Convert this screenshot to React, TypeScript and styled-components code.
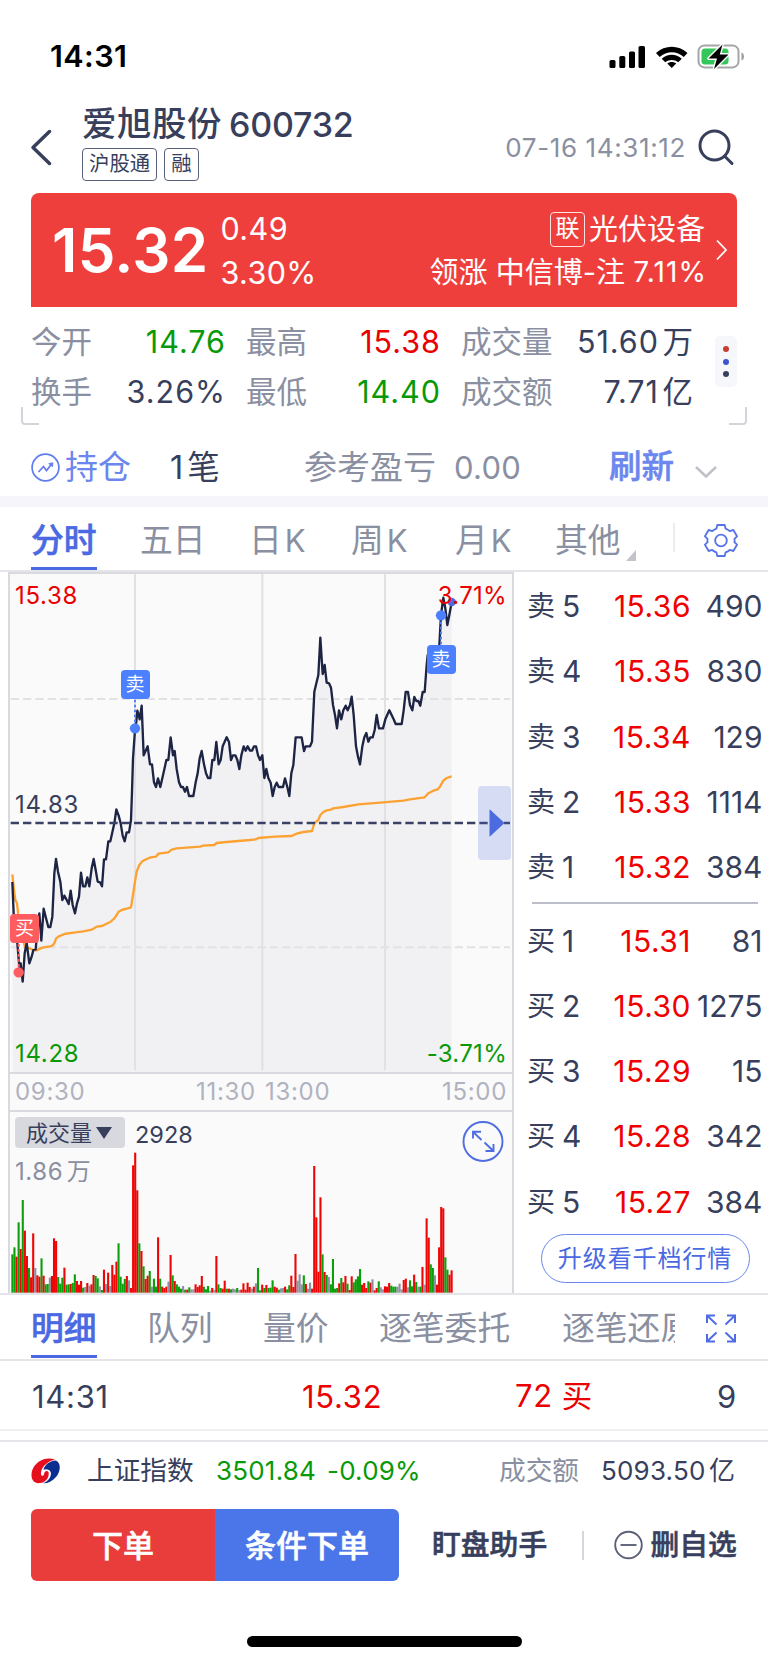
import React from 'react';
import styled, { createGlobalStyle, css } from 'styled-components';

const INK = '#383f5c';
const MUTED = '#8a8fa1';
const RED = '#ea0000';
const GREEN = '#089908';
const BLUE = '#4a69e2';
const LINE = '#e5e5e9';
const FRAME = '#d9dae0';

const Global = createGlobalStyle`
  html, body { margin: 0; padding: 0; background: #fff; }
  * { box-sizing: border-box; }
  body {
    font-family: Inter, "Noto Sans CJK SC", sans-serif;
    color: ${INK};
    line-height: 1;
    -webkit-font-smoothing: antialiased;
  }
  svg { display: block; flex: none; }
`;

/* a weight between medium and bold */
const semibold = css`
  font-weight: 500;
  -webkit-text-stroke: 0.55px currentColor;
`;

const Screen = styled.main`
  width: 768px;
  height: 1663px;
  display: flex;
  flex-direction: column;
  overflow: hidden;
  background: #fff;
  white-space: nowrap;
`;

/* ---------- status bar ---------- */
const StatusBar = styled.div`
  height: 100px;
  padding: 12px 22px 0 50px;
  display: flex;
  justify-content: space-between;
  align-items: center;
`;
const Clock = styled.span`
  font-size: 30.5px;
  font-weight: 600;
  color: #000;
  letter-spacing: 0.4px;
`;

/* ---------- header ---------- */
const Header = styled.header`
  height: 93px;
  padding-left: 29px;
  display: flex;
`;
const BackWrap = styled.div`
  width: 53px;
  padding-top: 28px;
`;
const TitleBlock = styled.div`
  flex: 1;
  padding-top: 6.5px;
`;
const Title = styled.h1`
  margin: 0;
  height: 36px;
  display: flex;
  align-items: center;
  gap: 7px;
  font-size: 34.5px;
  font-weight: 500;
`;
const Code = styled.span`
  font-size: 34px;
  font-weight: 500;
  letter-spacing: -0.2px;
`;
const Name = styled.span`
  letter-spacing: 0.5px;
`;
const Tags = styled.div`
  display: flex;
  gap: 7px;
  margin-top: 5.5px;
`;
const Tag = styled.span`
  height: 33px;
  padding: 0 6px;
  display: flex;
  align-items: center;
  border: 1.5px solid #5b617b;
  border-radius: 4px;
  font-size: 20.4px;
`;
const Stamp = styled.div`
  padding: 35px 12px 0 0;
  height: 60px;
  font-size: 26px;
  letter-spacing: 0.62px;
  color: ${MUTED};
`;
const SearchWrap = styled.div`
  width: 70px;
  padding-top: 29px;
`;

/* ---------- quote card ---------- */
const QuoteCard = styled.section`
  height: 114px;
  margin: 0 31px;
  padding-left: 21px;
  border-radius: 8px 8px 0 0;
  background: #ef3f3d;
  color: #fff;
  display: flex;
`;
const Price = styled.div`
  width: 168.5px;
  padding-top: 27px;
  font-size: 60px;
  font-weight: 600;
  letter-spacing: 0.3px;
`;
const Change = styled.div`
  display: flex;
  flex-direction: column;
  padding-top: 21px;
  gap: 13px;
  font-size: 30.5px;
  letter-spacing: 0.4px;
`;
const Sector = styled.div`
  flex: 1;
  padding-top: 18px;
  display: flex;
  flex-direction: column;
  align-items: flex-end;
`;
const SectorRow = styled.div`
  height: 36px;
  display: flex;
  align-items: center;
  font-size: 29px;
`;
const LeadRow = styled.div`
  height: 44px;
  margin-top: 3px;
  display: flex;
  align-items: center;
  font-size: 29px;
  white-space: pre;
`;
const LeadNumber = styled.span`
  font-size: 28px;
  letter-spacing: 1.1px;
  margin-right: -2px;
`;
const SectorTag = styled.span`
  width: 35px;
  height: 35px;
  margin-right: 4px;
  border: 1.5px solid rgba(255, 255, 255, 0.85);
  border-radius: 4px;
  display: flex;
  align-items: center;
  justify-content: center;
  font-size: 24px;
`;
const CardArrow = styled.div`
  width: 32px;
  padding: 46px 0 0 10px;
`;

/* ---------- stats ---------- */
const Stats = styled.section`
  position: relative;
  height: 118px;
  padding: 10.5px 31px 0 31px;
  display: flex;
`;
const StatGrid = styled.div`
  width: 662px;
  display: grid;
  grid-template-columns: 62px 132px 83px 132px 113px 139px;
  grid-auto-rows: 49.5px;
  align-items: center;
  font-size: 30px;
`;
const StatLabel = styled.span<{ $inset?: boolean }>`
  color: ${MUTED};
  padding-left: ${p => (p.$inset ? 21 : 0)}px;
  font-size: 30.5px;
`;
const StatValue = styled.span<{ $c?: string }>`
  text-align: right;
  color: ${p => p.$c || INK};
  font-size: 30.5px;
  letter-spacing: 1px;
  margin-right: -1px;
`;
const Unit = styled.span`
  margin-left: 3.5px;
  letter-spacing: 0;
`;
const MoreDots = styled.div`
  width: 22px;
  height: 51px;
  margin: 18.5px 0 0 22px;
  padding: 10px 0;
  border-radius: 5px;
  background: #f6f7fa;
  display: flex;
  flex-direction: column;
  align-items: center;
  justify-content: space-between;
`;
const Dot = styled.i<{ $c: string }>`
  width: 6px;
  height: 6px;
  border-radius: 3px;
  background: ${p => p.$c};
`;
const Corner = styled.i<{ $side: 'left' | 'right' }>`
  position: absolute;
  bottom: 0;
  ${p => p.$side}: 21px;
  width: 18px;
  height: 18px;
  border-bottom: 2px solid #d3d5dc;
  border-${p => p.$side}: 2px solid #d3d5dc;
  border-bottom-${p => p.$side}-radius: 4px;
`;

/* ---------- holdings ---------- */
const Holdings = styled.section`
  height: 71px;
  padding: 14px 50px 0 31px;
  display: flex;
  align-items: center;
  font-size: 33px;
`;
const HoldLabel = styled.span`
  width: 103px;
  padding-left: 5px;
  color: #6b86ee;
`;
const HoldCount = styled.span`
  width: 141px;
  padding-left: 7px;
  padding-top: 1px;
  font-size: 32.5px;
`;
const CountUnit = styled.span`
  margin-left: 4px;
`;
const HoldHint = styled.span`
  width: 150px;
  color: ${MUTED};
`;
const HoldValue = styled.span`
  width: 155px;
  color: ${MUTED};
  font-size: 31px;
  letter-spacing: 0.3px;
`;
const Refresh = styled.button`
  border: 0;
  padding: 0;
  background: none;
  font: inherit;
  ${semibold}
  font-size: 32.5px;
  color: #6b86ee;
  width: 86px;
  text-align: left;
`;
const Band = styled.div`
  height: 11px;
  background: #f5f5fb;
`;

/* ---------- tabs ---------- */
const Tabs = styled.nav<{ $h: number }>`
  height: ${p => p.$h}px;
  padding-left: 31px;
  border-bottom: 2px solid ${LINE};
  display: flex;
`;
const Tab = styled.span<{ $w: number; $active?: boolean }>`
  width: ${p => p.$w}px;
  flex: none;
  overflow: hidden;
  font-size: 32.8px;
  line-height: 66px;
  color: ${p => (p.$active ? BLUE : MUTED)};
  ${p => p.$active && semibold}
`;
const ActiveMark = styled.span`
  display: block;
  width: 66px;
  height: 63px;
  border-bottom: 3px solid ${BLUE};
`;
const Kline = styled.span`
  display: inline-block;
  margin-left: 3px;
  font-size: 31px;
`;
const TabTools = styled.div<{ $top: number }>`
  padding-top: ${p => p.$top}px;
  display: flex;
`;
const TabCorner = styled.i`
  width: 47px;
  padding-top: 27px;
`;
const TabRule = styled.i`
  width: 1.5px;
  height: 29px;
  margin-right: 29.5px;
  background: #ececf0;
`;

/* ---------- chart and order book ---------- */
const Market = styled.section`
  height: 723px;
  padding-left: 8px;
  border-bottom: 2px solid ${LINE};
  display: flex;
`;
const ChartColumn = styled.div`
  width: 506px;
  border: 2px solid ${FRAME};
  border-bottom: 0;
  background: #fafafa;
  display: flex;
  flex-direction: column;
`;
const PricePane = styled.div`
  position: relative;
  height: 500px;
  border-bottom: 2px solid ${FRAME};
`;
const AxisLabel = styled.span<{ $x: 'left' | 'right'; $top: number; $c: string }>`
  position: absolute;
  ${p => p.$x}: 5px;
  top: ${p => p.$top}px;
  font-size: 24px;
  letter-spacing: ${p => (p.$x === 'left' ? 0.7 : 0.3)}px;
  color: ${p => p.$c};
`;
const TradePin = styled.span<{ $x: number; $y: number; $c: string }>`
  position: absolute;
  left: ${p => p.$x}px;
  top: ${p => p.$y}px;
  width: 29px;
  height: 29px;
  border-radius: 4px;
  background: ${p => p.$c};
  color: #fff;
  font-size: 19px;
  line-height: 29px;
  text-align: center;
`;
const Handle = styled.div`
  position: absolute;
  right: 1px;
  top: 212px;
  width: 33px;
  height: 74px;
  padding: 23px 0 0 11px;
  border-radius: 4px;
  background: rgba(77, 107, 224, 0.21);
`;
const TimeAxis = styled.div`
  height: 38px;
  padding: 5px 5px 0;
  border-bottom: 2px solid ${FRAME};
  display: grid;
  grid-template-columns: 181px 69px 1fr auto;
  font-size: 24px;
  line-height: 26px;
  letter-spacing: 0.7px;
  color: #b0b3bf;
`;
const VolumePane = styled.div`
  position: relative;
  flex: 1;
  padding: 5px 8px 0 5px;
`;
const VolumeHead = styled.div`
  position: relative;
  display: flex;
  height: 31px;
`;
const Indicator = styled.span`
  width: 110px;
  padding-left: 11px;
  border-radius: 4px;
  background: #d8d9de;
  display: flex;
  align-items: center;
  gap: 4px;
  font-size: 22px;
`;
const VolumeNow = styled.span`
  flex: 1;
  padding: 6px 0 0 10px;
  font-size: 23.5px;
`;
const ExpandWrap = styled.div`
  padding-top: 3.5px;
`;
const VolumeMax = styled.div`
  position: relative;
  margin: 12px 0 0 0;
  font-size: 24px;
  letter-spacing: 0.6px;
  color: ${MUTED};
`;
const VolumePlot = styled.svg`
  position: absolute;
  left: 0;
  bottom: 0;
`;
const Book = styled.div`
  flex: 1;
  padding: 1.5px 5px 0 13px;
`;
const BookRow = styled.div`
  height: 65.25px;
  display: grid;
  grid-template-columns: 35px 48px 81px 71.5px;
  align-items: center;
  font-size: 30px;
`;
const Side = styled.span`
  font-size: 28px;
`;
const BookPrice = styled.span`
  color: #f00000;
  text-align: right;
  letter-spacing: 0.5px;
`;
const BookQty = styled.span`
  text-align: right;
  justify-self: end;
`;
const BookRule = styled.div`
  height: 2px;
  margin: 2.7px 5px 3.5px;
  background: #bcbec9;
`;
const Upgrade = styled.button`
  display: block;
  width: 209px;
  height: 49px;
  margin: 0 0 0 13.5px;
  padding: 0;
  border: 1.5px solid #6b87ee;
  border-radius: 25px;
  background: #fff;
  color: ${BLUE};
  font: inherit;
  font-size: 24px;
  letter-spacing: 0.9px;
`;

/* ---------- tick list ---------- */
const Tick = styled.div`
  height: 70px;
  padding: 2px 31px 0 32px;
  border-bottom: 2px solid #f0f0f2;
  display: grid;
  grid-template-columns: 270px 213px 1fr auto;
  align-items: center;
  font-size: 31px;
  letter-spacing: 0.7px;
`;
const Up = styled.span`
  color: ${RED};
`;
const TickSide = styled.span`
  margin-left: 9px;
  font-size: 30.5px;
`;

/* ---------- footer ---------- */
const IndexBar = styled.section`
  height: 61px;
  margin-top: 9px;
  padding: 0 31px 2px;
  border-top: 2px solid ${LINE};
  display: flex;
  align-items: center;
  font-size: 26px;
`;
const IndexName = styled.span`
  width: 129px;
  margin-left: 27px;
  font-size: 26.7px;
`;
const IndexValue = styled.span<{ $w: number }>`
  width: ${p => p.$w}px;
  color: ${GREEN};
  letter-spacing: 0.2px;
`;
const IndexLabel = styled.span`
  width: 102px;
  color: ${MUTED};
  font-size: 26.7px;
`;
const IndexTurnover = styled.span`
  letter-spacing: 0.2px;
`;
const Actions = styled.section`
  height: 72px;
  margin-top: 8px;
  padding-left: 31px;
  display: flex;
  align-items: center;
`;
const OrderButton = styled.button<{ $c: string; $r: string }>`
  width: 184px;
  height: 72px;
  border: 0;
  padding: 0;
  border-radius: ${p => p.$r};
  background: ${p => p.$c};
  color: #fff;
  font: inherit;
  font-size: 31px;
  ${semibold}
`;
const Assistant = styled.span`
  width: 150px;
  margin-left: 33px;
  font-size: 28.8px;
  ${semibold}
`;
const ActionRule = styled.i`
  width: 1.5px;
  height: 29px;
  margin-right: 30px;
  background: #d5d7de;
`;
const Remove = styled.span`
  margin-left: 8px;
  font-size: 28.8px;
  ${semibold}
`;
const HomeBar = styled.div`
  width: 275px;
  height: 11px;
  margin: 55px 0 0 247px;
  border-radius: 6px;
  background: #000;
`;

/* ---------- data ---------- */
const asks = [['5', '15.36', '490'], ['4', '15.35', '830'], ['3', '15.34', '129'], ['2', '15.33', '1114'], ['1', '15.32', '384']];
const bids = [['1', '15.31', '81'], ['2', '15.30', '1275'], ['3', '15.29', '15'], ['4', '15.28', '342'], ['5', '15.27', '384']];

const priceLine = `37,951 41,1045 46,1080 52,1135 58,1205 62,1195 68,1250 74,1165 80,1133 88,1195 95,1175 100,1155 107,1153
112,1095 118,1045 124,1127 131,1031 137,1055 145,1086 151,1086 157,1055 163,925 168,882 174,920 181,950 187,1005 193,992
199,1003 206,1017 212,977 218,1020 225,1045 231,1015 237,995 243,923 249,964 256,964 262,937 268,964 275,910 281,882
287,915 293,950 300,952 306,964 312,883 318,883 325,829 331,829 343,775 349,733 356,752 362,775 368,812 374,829 380,802
387,802 393,765 396,680 399,580 405,495 409,470 412,437 416,450 419,463 425,422 431,571 443,544 450,598 456,598 462,652
468,666 474,640 481,666 493,613 499,585 505,585 512,517 519,571 524,558 530,612 537,652 543,666 549,666 555,680 561,666
567,693 580,693 587,652 593,625 599,580 605,558 612,598 618,625 624,639 631,639 637,585 643,585 649,531 656,598 662,585
668,544 680,517 687,531 693,585 699,571 706,571 712,585 718,612 724,571 731,544 737,557 743,544 750,557 756,557 762,544
768,544 774,571 780,585 787,571 793,639 799,612 805,639 812,653 818,693 824,666 830,653 836,666 849,666 855,640 862,666
868,693 874,625 880,600 887,517 905,517 912,558 917,544 930,544 936,530 943,380 949,355 955,330 961,218 968,327 974,300
980,353 987,355 993,368 999,420 1005,450 1011,490 1017,436 1024,463 1030,436 1037,422 1043,436 1050,420 1055,395
1061,450 1068,544 1074,575 1080,598 1087,544 1093,517 1099,504 1105,530 1111,517 1118,517 1124,495 1130,450 1137,490
1149,490 1156,463 1168,436 1181,463 1187,477 1205,477 1211,436 1217,381 1224,381 1230,420 1237,436 1243,396 1249,408
1255,408 1261,422 1268,381 1274,381 1280,300 1283,270 1295,262 1318,240 1323,150 1330,98 1336,130 1342,180 1348,150 1355,112`;

const averageLine = `37,928 42,975 46,1005 51,1015 55,1050 65,1115 75,1145 90,1151 100,1155 110,1156 120,1151 131,1147 150,1144
157,1142 163,1135 168,1121 175,1115 193,1107 220,1103 250,1099 275,1094 290,1085 306,1083 318,1077 331,1071 343,1060
350,1050 356,1040 365,1035 380,1031 393,1027 399,990 405,950 410,920 418,900 427,889 440,882 452,877 468,875 475,866
505,862 515,854 530,850 600,845 610,842 643,840 650,834 680,831 750,825 767,823 775,819 825,815 875,813 890,806 910,801
936,798 943,775 955,765 961,750 970,741 980,736 992,734 1000,730 1030,726 1075,718 1150,712 1210,707 1230,703 1274,697
1285,685 1300,677 1313,673 1320,665 1330,647 1340,639 1355,634`;

const volumes = `G115 G136 R108 G211 R131 G278 R186 R110 G74 R46 R178 N74 R52 R48 G103 R51 G25 G26 N45 R50 R163 R155 G47 G27
G45 R75 G24 G25 R26 G29 G55 R35 R24 R35 G15 N17 R29 N21 R25 R53 G50 G43 N19 G8 R69 N26 R60 N20 R83 R54 R93 G148 G48 G27
G41 R50 N37 R14 R382 R420 R307 G148 R125 G79 R41 R51 G65 N18 G42 G18 R166 G42 R18 R14 R18 N33 R113 G52 R35 G25 G18 G12
N20 G9 R9 G16 N10 N10 R25 R17 R22 R50 G18 G10 G20 N6 R14 N8 R110 G25 G14 R12 R36 G12 R12 G10 N12 N10 G14 N8 R9 R28 R9
R30 R17 N12 R18 N28 G74 G7 R24 G14 R23 G14 G15 G37 R18 R15 G9 N13 N14 R18 G10 G22 R51 R17 R116 N36 N55 N25 G52 R26 N12
N30 R12 R380 R226 R63 R286 G115 R62 G53 N47 G25 G101 G12 G14 R28 G44 R31 R50 G27 R8 R49 G31 G40 G49 G71 R24 R29 R14 G34
R30 N40 R7 R14 G34 N16 N10 R19 R18 R29 G21 G18 G18 N18 N27 N10 R38 R42 N16 G37 G19 R54 G32 N18 G18 R77 N24 R223 R165 G85
G74 N52 R24 R136 R257 R253 G106 G69 R54 R67`.split(/\s+/);
const volumeColors: Record<string, string> = { R: '#ee0505', G: '#0c9f0c', N: '#8e91a0' };

/* ---------- pieces ---------- */
const StatusIcons = () => (
  <svg width="138" height="26" viewBox="0 0 138 26">
    <rect x="1.500" y="17" width="6" height="8" rx="1.6" />
    <rect x="11.300" y="13" width="6" height="12" rx="1.6" />
    <rect x="21" y="8.500" width="6" height="16.500" rx="1.6" />
    <rect x="30.500" y="3" width="6.500" height="22" rx="1.6" />
    <path d="M48 10 C57 1.500 70.500 1.500 79.500 10 L75.800 13.900 C69 7.600 58.500 7.600 51.700 13.900 Z" />
    <path d="M53.700 15.700 C59.500 10.300 68 10.300 73.800 15.700 L70.200 19.300 C66.500 16.300 61 16.300 57.300 19.300 Z" />
    <path d="M59.300 20.600 C62 18.600 65.500 18.600 68.200 20.600 L63.750 25 Z" />
    <rect x="90.500" y="2.400" width="40" height="22" rx="6" fill="none" stroke="#a6a6a8" strokeWidth="2" />
    <path d="M133.500 9.500 C136.800 10.500 136.800 16.500 133.500 17.500 Z" fill="#9c9c9e" />
    <rect x="93.500" y="5.400" width="27" height="16" rx="3.500" fill="#33c759" />
    <path d="M114.500 1.500 L100.500 15.500 H109 L106 26 L120.500 11.500 H111.800 Z" stroke="#fff" strokeWidth="2.800" strokeLinejoin="round" paintOrder="stroke" />
  </svg>
);

const Gear = () => (
  <svg width="34" height="35" viewBox="0 0 35 35" fill="none" stroke="#5674e8" strokeWidth="1.900" strokeLinejoin="round">
    <path d="M13.700 1.500 H21.300 L22.300 5.300 C24 6 25.200 6.700 26.500 7.800 L30.200 6.700 L34 13.200 L31.300 15.800 C31.600 17 31.600 18 31.300 19.200 L34 21.800 L30.200 28.300 L26.500 27.200 C25.200 28.300 24 29 22.300 29.700 L21.300 33.500 H13.700 L12.700 29.700 C11 29 9.800 28.300 8.500 27.200 L4.800 28.300 L1 21.800 L3.700 19.200 C3.400 18 3.400 17 3.700 15.800 L1 13.200 L4.800 6.700 L8.500 7.800 C9.800 6.700 11 6 12.700 5.300 Z" />
    <circle cx="17.500" cy="17.500" r="6" />
  </svg>
);

const PricePlot = () => (
  <svg width="502" height="498" viewBox="30 27 1506 1494" fill="none">
    <polygon points={`37,1521 ${priceLine} 1355,1521`} fill="#f1f1f4" />
    {[405, 787, 1155].map(x => (
      <line key={x} x1={x} x2={x} y1="27" y2="1516" stroke="#e1e1e4" strokeWidth="6" />
    ))}
    {[402, 1147].map(y => (
      <line key={y} x1="32" x2="1530" y1={y} y2={y} stroke="#e2e2e5" strokeWidth="6" strokeDasharray="25 12" />
    ))}
    <polyline points={averageLine} stroke="#fca233" strokeWidth="7" strokeLinejoin="round" />
    <polyline points={priceLine} stroke="#1d2444" strokeWidth="7" strokeLinejoin="round" />
    <line x1="32" x2="1530" y1="774" y2="774" stroke="#3b4164" strokeWidth="7" strokeDasharray="25 12" />
    <g stroke="#4d80ff" strokeWidth="6" strokeDasharray="8 7">
      <path d="M405 404 V475" />
      <path d="M1323 238 V165" />
      <path d="M56 1137 V1210" stroke="#ff5c60" />
    </g>
    <circle cx="405" cy="490" r="15.500" fill="#4d80ff" />
    <circle cx="1323" cy="151" r="15.500" fill="#4d80ff" />
    <circle cx="1355" cy="111" r="12.500" fill="#4f6ae0" />
    <circle cx="56" cy="1222" r="15.500" fill="#ff5c60" />
  </svg>
);

export default function App() {
  return (
    <Screen>
      <Global />
      <StatusBar>
        <Clock>14:31</Clock>
        <StatusIcons />
      </StatusBar>

      <Header>
        <BackWrap>
          <svg width="26" height="40" viewBox="0 0 26 40" fill="none" stroke={INK} strokeWidth="3.500" strokeLinecap="round" strokeLinejoin="round">
            <path d="M20.500 3.500 L4 19.500 L20.500 35.500" />
          </svg>
        </BackWrap>
        <TitleBlock>
          <Title>
            <Name>爱旭股份</Name>
            <Code>600732</Code>
          </Title>
          <Tags>
            <Tag>沪股通</Tag>
            <Tag>融</Tag>
          </Tags>
        </TitleBlock>
        <Stamp>07-16 14:31:12</Stamp>
        <SearchWrap>
          <svg width="38" height="38" viewBox="0 0 38 38" fill="none" stroke={INK} strokeWidth="3" strokeLinecap="round">
            <circle cx="16.500" cy="16.500" r="14.500" />
            <path d="M26.500 27 L34 34.500" />
          </svg>
        </SearchWrap>
      </Header>

      <QuoteCard>
        <Price>15.32</Price>
        <Change>
          <span>0.49</span>
          <span>3.30%</span>
        </Change>
        <Sector>
          <SectorRow>
            <SectorTag>联</SectorTag>光伏设备
          </SectorRow>
          <LeadRow>领涨 中信博-注 <LeadNumber>7.11%</LeadNumber></LeadRow>
        </Sector>
        <CardArrow>
          <svg width="14" height="22" viewBox="0 0 14 22" fill="none" stroke="#fff" strokeWidth="1.800">
            <path d="M2 1.500 L11 11 L2 20.500" />
          </svg>
        </CardArrow>
      </QuoteCard>

      <Stats>
        <StatGrid>
          <StatLabel>今开</StatLabel>
          <StatValue $c={GREEN}>14.76</StatValue>
          <StatLabel $inset>最高</StatLabel>
          <StatValue $c={RED}>15.38</StatValue>
          <StatLabel $inset>成交量</StatLabel>
          <StatValue>51.60<Unit>万</Unit></StatValue>
          <StatLabel>换手</StatLabel>
          <StatValue>3.26%</StatValue>
          <StatLabel $inset>最低</StatLabel>
          <StatValue $c={GREEN}>14.40</StatValue>
          <StatLabel $inset>成交额</StatLabel>
          <StatValue>7.71<Unit>亿</Unit></StatValue>
        </StatGrid>
        <MoreDots>
          <Dot $c="#c63d31" />
          <Dot $c="#3b55cf" />
          <Dot $c="#383f5c" />
        </MoreDots>
        <Corner $side="left" />
        <Corner $side="right" />
      </Stats>

      <Holdings>
        <svg width="29" height="29" viewBox="0 0 29 29" fill="none" stroke="#5f7ded" strokeWidth="1.700">
          <circle cx="14.500" cy="14.500" r="13.400" />
          <path d="M7.500 19 L12.500 13.500 L15.500 17.500 L21 10.500" />
          <path d="M17.500 10.700 L21.800 9.700 L21.500 14" fill="#5f7ded" strokeWidth="0.800" />
        </svg>
        <HoldLabel>持仓</HoldLabel>
        <HoldCount>1<CountUnit>笔</CountUnit></HoldCount>
        <HoldHint>参考盈亏</HoldHint>
        <HoldValue>0.00</HoldValue>
        <Refresh>刷新</Refresh>
        <svg width="22" height="22" viewBox="0 0 22 22" fill="none" stroke="#bfc1c9" strokeWidth="2.500">
          <path d="M1 10 L11 19.500 L21 10" />
        </svg>
      </Holdings>
      <Band />

      <Tabs $h={65}>
        <Tab $w={109} $active><ActiveMark>分时</ActiveMark></Tab>
        <Tab $w={109}>五日</Tab>
        <Tab $w={102}>日<Kline>K</Kline></Tab>
        <Tab $w={104}>周<Kline>K</Kline></Tab>
        <Tab $w={100}>月<Kline>K</Kline></Tab>
        <Tab $w={71}>其他</Tab>
        <TabTools $top={16}>
          <TabCorner>
            <svg width="10" height="11" viewBox="0 0 10 11"><path d="M10 0 V11 H0 Z" fill="#c3c4c9" /></svg>
          </TabCorner>
          <TabRule />
          <Gear />
        </TabTools>
      </Tabs>

      <Market>
        <ChartColumn>
          <PricePane>
            <AxisLabel $x="left" $top={9.5} $c={RED}>15.38</AxisLabel>
            <AxisLabel $x="right" $top={9.5} $c={RED}>3.71%</AxisLabel>
            <PricePlot />
            <AxisLabel $x="left" $top={219} $c={INK}>14.83</AxisLabel>
            <AxisLabel $x="left" $top={467.5} $c={GREEN}>14.28</AxisLabel>
            <AxisLabel $x="right" $top={467.5} $c={GREEN}>-3.71%</AxisLabel>
            <TradePin $x={110.5} $y={96} $c="#4d80ff">卖</TradePin>
            <TradePin $x={416.5} $y={71} $c="#4d80ff">卖</TradePin>
            <TradePin $x={0} $y={340} $c="#ff5c60">买</TradePin>
            <Handle>
              <svg width="16" height="28" viewBox="0 0 16 28"><path d="M0.500 1 Q0.500 0 1.500 1 L15.500 14 L1.500 27 Q0.500 28 0.500 27 Z" fill="#4d6be0" /></svg>
            </Handle>
          </PricePane>
          <TimeAxis>
            <span>09:30</span>
            <span>11:30</span>
            <span>13:00</span>
            <span>15:00</span>
          </TimeAxis>
          <VolumePane>
            <VolumePlot width="502" height="180" viewBox="30 36 1506 540">
              {volumes.map((v, i) => {
                const h = Number(v.slice(1));
                return <rect key={i} x={34 + i * 6.245} y={575 - h} width="6.300" height={h} fill={volumeColors[v[0]]} />;
              })}
            </VolumePlot>
            <VolumeHead>
              <Indicator>
                成交量
                <svg width="16" height="12" viewBox="0 0 16 12"><path d="M0 0 H16 L8 12 Z" fill={INK} /></svg>
              </Indicator>
              <VolumeNow>2928</VolumeNow>
              <ExpandWrap>
                <svg width="42" height="42" viewBox="0 0 42 42" fill="none" stroke="#4f6de3" strokeWidth="1.900">
                  <circle cx="21" cy="20.500" r="19.500" />
                  <path d="M19.500 19 L11 10.800 M11 17.500 V10.800 H19 M22.500 21.500 L31.500 30 M31.500 23 V30 H23.500" />
                </svg>
              </ExpandWrap>
            </VolumeHead>
            <VolumeMax>1.86<Unit>万</Unit></VolumeMax>
          </VolumePane>
        </ChartColumn>

        <Book>
          {asks.map(r => (
            <BookRow key={'a' + r[0]}>
              <Side>卖</Side><span>{r[0]}</span><BookPrice>{r[1]}</BookPrice><BookQty>{r[2]}</BookQty>
            </BookRow>
          ))}
          <BookRule />
          {bids.map(r => (
            <BookRow key={'b' + r[0]}>
              <Side>买</Side><span>{r[0]}</span><BookPrice>{r[1]}</BookPrice><BookQty>{r[2]}</BookQty>
            </BookRow>
          ))}
          <Upgrade>升级看千档行情</Upgrade>
        </Book>
      </Market>

      <Tabs $h={66}>
        <Tab $w={116} $active><ActiveMark>明细</ActiveMark></Tab>
        <Tab $w={116}>队列</Tab>
        <Tab $w={116}>量价</Tab>
        <Tab $w={183}>逐笔委托</Tab>
        <Tab $w={113}>逐笔还原</Tab>
        <TabTools $top={19}>
          <svg width="62" height="30" viewBox="0 0 62 30" fill="none" stroke="#4f6de3" strokeWidth="2">
            <path d="M32 9 V1.500 H40 M32 1.500 L41.500 10.500 M52 1.500 H60 V9 M60 1.500 L50.500 10.500 M32 20 V27.500 H40 M32 27.500 L41.500 18.500 M52 27.500 H60 V20 M60 27.500 L50.500 18.500" />
          </svg>
        </TabTools>
      </Tabs>
      <Tick>
        <span>14:31</span>
        <Up>15.32</Up>
        <Up>72<TickSide>买</TickSide></Up>
        <span>9</span>
      </Tick>

      <IndexBar>
        <svg width="29" height="26" viewBox="0 0 29 26">
          <path d="M24 1.500 C15 -2 4 3 1 13 C-1 21 3 26 9 25 C15.500 24 18.500 19 17.500 14 C16 12 13.500 13 13 16 C13 18 10.500 18.500 10 16.500 C9.500 10 15 4 24 1.500 Z" fill="#e60f1e" />
          <path d="M25 2.500 C30 5 30 13 25 19 C21 23.500 16 25.800 12 25.300 C18 23 20.500 18 19.800 14.500 C19 11.500 15 10.500 12.500 11.800 C13.500 7 18 3 25 2.500 Z" fill="#0b2f8f" />
        </svg>
        <IndexName>上证指数</IndexName>
        <IndexValue $w={111}>3501.84</IndexValue>
        <IndexValue $w={172}>-0.09%</IndexValue>
        <IndexLabel>成交额</IndexLabel>
        <IndexTurnover>5093.50<Unit>亿</Unit></IndexTurnover>
      </IndexBar>

      <Actions>
        <OrderButton $c="#e83d3b" $r="6px 0 0 6px">下单</OrderButton>
        <OrderButton $c="#4a76e9" $r="0 6px 6px 0">条件下单</OrderButton>
        <Assistant>盯盘助手</Assistant>
        <ActionRule />
        <svg width="29" height="30" viewBox="0 0 29 30" fill="none" stroke="#5c6178" strokeWidth="1.900">
          <circle cx="14.500" cy="15" r="13.300" />
          <path d="M6.500 15 H22.500" />
        </svg>
        <Remove>删自选</Remove>
      </Actions>
      <HomeBar />
    </Screen>
  );
}
